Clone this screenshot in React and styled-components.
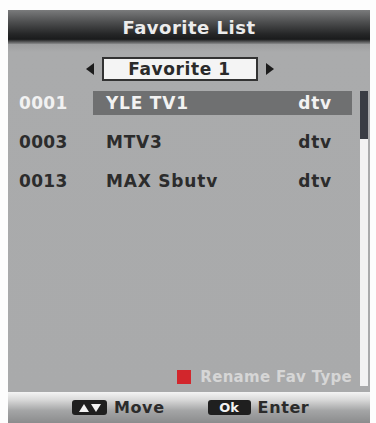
import React from "react";
import styled, { createGlobalStyle } from "styled-components";

const GlobalStyle = createGlobalStyle`
  html, body { margin: 0; padding: 0; background: #fdfdfd; }
  body { font-family: "DejaVu Sans", "Liberation Sans", sans-serif; }
`;

const channels = [
  { num: "0001", name: "YLE TV1", type: "dtv", active: true },
  { num: "0003", name: "MTV3", type: "dtv" },
  { num: "0013", name: "MAX Sbutv", type: "dtv" },
];

const Arrow = ({ dir }) => (
  <svg width="8" height="12" viewBox="0 0 8 12">
    <path d={dir === "left" ? "M8 0 L0 6 L8 12 Z" : "M0 0 L8 6 L0 12 Z"} fill="#1c1c1c" />
  </svg>
);

const App = () => {
  return (
    <>
      <GlobalStyle />
      <Screen>
        <Panel>
          <TitleBar>Favorite List</TitleBar>
          <Body>
            <Content>
              <GroupSelector>
                <Arrow dir="left" />
                <GroupBox>Favorite 1</GroupBox>
                <Arrow dir="right" />
              </GroupSelector>
              <List>
                {channels.map((c) => (
                  <Row key={c.num}>
                    <Num $active={c.active}>{c.num}</Num>
                    <Item $active={c.active}>
                      <span>{c.name}</span>
                      <span>{c.type}</span>
                    </Item>
                  </Row>
                ))}
              </List>
              <Hint>
                <RedKey />
                Rename Fav Type
              </Hint>
            </Content>
            <ScrollTrack>
              <ScrollThumb />
            </ScrollTrack>
          </Body>
          <Footer>
            <FooterItem>
              <KeyBadge $w={35}>
                <svg width="24" height="10" viewBox="0 0 24 10">
                  <path d="M1 9 L6 1 L11 9 Z" fill="#f2f2f2" />
                  <path d="M13 1 L23 1 L18 9 Z" fill="#f2f2f2" />
                </svg>
              </KeyBadge>
              Move
            </FooterItem>
            <FooterItem>
              <KeyBadge $w={43}>Ok</KeyBadge>
              Enter
            </FooterItem>
          </Footer>
        </Panel>
      </Screen>
    </>
  );
};

export default App;

const Screen = styled.div`
  width: 376px;
  height: 423px;
  padding: 10px 6px 0 8px;
  box-sizing: border-box;
  overflow: hidden;
`;

const Panel = styled.div`
  width: 362px;
  height: 413px;
  display: flex;
  flex-direction: column;
  background: #a8a9aa;
`;

const TitleBar = styled.div`
  height: 34px;
  flex: none;
  display: flex;
  align-items: center;
  justify-content: center;
  color: #ececec;
  font-size: 18px;
  font-weight: bold;
  letter-spacing: 0.5px;
  background: linear-gradient(
    to bottom,
    #7a7b7c 0%,
    #4e4f50 35%,
    #262728 70%,
    #1a1b1c 86%,
    #8a8b8c 100%
  );
`;

const Body = styled.div`
  flex: 1;
  display: flex;
  padding: 0 2px 6px 11px;
  background: linear-gradient(to bottom, #9c9d9e 0px, #aaabac 8px, #a9aaab 100%);
`;

const Content = styled.div`
  flex: 1;
  display: flex;
  flex-direction: column;
`;

const GroupSelector = styled.div`
  display: flex;
  align-items: center;
  justify-content: center;
  gap: 8px;
  margin: 13px 0 0 0;
  padding-right: 12px;
`;

const GroupBox = styled.div`
  width: 152px;
  height: 20px;
  border: 2px solid #333;
  background: #f4f4f4;
  display: flex;
  align-items: center;
  justify-content: center;
  font-size: 17px;
  font-weight: bold;
  letter-spacing: 0.6px;
  color: #2a2a2a;
`;

const List = styled.div`
  display: flex;
  flex-direction: column;
  gap: 15px;
  margin-top: 10px;
`;

const Row = styled.div`
  display: flex;
  align-items: center;
  height: 24px;
`;

const Num = styled.div`
  width: 74px;
  font-size: 17px;
  font-weight: bold;
  letter-spacing: 0.3px;
  color: ${(p) => (p.$active ? "#f2f2f2" : "#2c2c2c")};
`;

const Item = styled.div`
  width: 259px;
  height: 24px;
  box-sizing: border-box;
  display: flex;
  align-items: center;
  justify-content: space-between;
  padding: 0 20px 0 13px;
  font-size: 17px;
  font-weight: bold;
  letter-spacing: 0.8px;
  color: ${(p) => (p.$active ? "#f2f2f2" : "#2c2c2c")};
  background: ${(p) => (p.$active ? "#6f7071" : "transparent")};
`;

const Hint = styled.div`
  margin-top: auto;
  display: flex;
  align-items: center;
  justify-content: flex-end;
  gap: 9px;
  padding-right: 0;
  font-size: 15px;
  font-weight: bold;
  letter-spacing: 0.3px;
  color: #d6d6d6;
`;

const RedKey = styled.span`
  width: 14px;
  height: 14px;
  background: #d2262c;
  display: inline-block;
`;

const ScrollTrack = styled.div`
  width: 9px;
  margin: 47px 0 0 8px;
  background: #f2f2f2;
  display: flex;
  flex-direction: column;
`;

const ScrollThumb = styled.div`
  height: 48px;
  background: #3a3d44;
`;

const Footer = styled.div`
  height: 31px;
  flex: none;
  display: flex;
  align-items: center;
  padding-left: 64px;
  gap: 43px;
  background: linear-gradient(
    to bottom,
    #f4f4f4 0%,
    #d9d9d9 25%,
    #a4a5a6 60%,
    #8b8c8d 100%
  );
`;

const FooterItem = styled.div`
  display: flex;
  align-items: center;
  gap: 7px;
  font-size: 16px;
  font-weight: bold;
  letter-spacing: 0.6px;
  color: #2b2b2b;
`;

const KeyBadge = styled.span`
  width: ${(p) => p.$w}px;
  height: 15px;
  border-radius: 3px;
  background: #1f1f1f;
  color: #f2f2f2;
  font-size: 13px;
  font-weight: bold;
  letter-spacing: 0;
  display: inline-flex;
  align-items: center;
  justify-content: center;
`;
